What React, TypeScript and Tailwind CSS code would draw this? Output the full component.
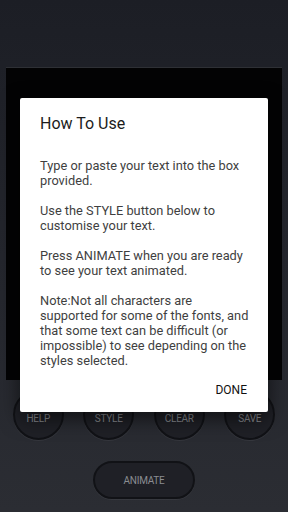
const Round = ({ label }: { label: string }) => (
  <div className="flex justify-center">
    <div className="w-[51px] h-[51px] rounded-full bg-[#1f2026] border-2 border-[#111216] shadow-[0_1px_0_rgba(255,255,255,0.06)] flex items-center justify-center">
      <span className="text-[10px] text-[#8a8c91] tracking-tight mt-[8px]">{label}</span>
    </div>
  </div>
)

const App = () => {
  return (
    <div className="relative w-[288px] h-[512px] overflow-hidden bg-gradient-to-b from-[#1c1e25] via-[#24262d] to-[#2b2d33] font-['Roboto',sans-serif]">
      <div className="h-[67px]" />
      <div className="mx-[6px] h-[313px] bg-[#030304] border-t border-[#2e3035]" />

      <div className="grid grid-cols-4 px-[3px] mt-[9px]">
        <Round label="HELP" />
        <Round label="STYLE" />
        <Round label="CLEAR" />
        <Round label="SAVE" />
      </div>

      <div className="flex justify-center mt-[21px]">
        <div className="w-[102px] h-[38px] rounded-full bg-[#1f2026] border-2 border-[#111216] shadow-[0_1px_0_rgba(255,255,255,0.06)] flex items-center justify-center">
          <span className="text-[10px] text-[#8a8c91] tracking-tight">ANIMATE</span>
        </div>
      </div>

      <div className="absolute left-[20px] top-[98px] w-[248px] h-[314px] bg-white rounded-[2px] shadow-[0_6px_20px_rgba(0,0,0,0.6)] pl-[20px] pr-[18px] pt-[16px]">
        <h2 className="text-[16px] leading-[20px] text-[#1c1c1c]">How To Use</h2>
        <div className="mt-[24px] text-[12.8px] leading-[15px] text-[#3f3f3f]">
          <p>Type or paste your text into the box provided.</p>
          <p className="mt-[15px]">Use the STYLE button below to customise your text.</p>
          <p className="mt-[15px]">Press ANIMATE when you are ready to see your text animated.</p>
          <p className="mt-[15px]">
            Note:Not all characters are supported for some of the fonts, and that some text can be difficult (or impossible) to see depending on the styles selected.
          </p>
        </div>
        <div className="flex justify-end mt-[15px] pr-[3px]">
          <span className="text-[12px] leading-[14px] text-[#111]">DONE</span>
        </div>
      </div>
    </div>
  )
}

export default App
